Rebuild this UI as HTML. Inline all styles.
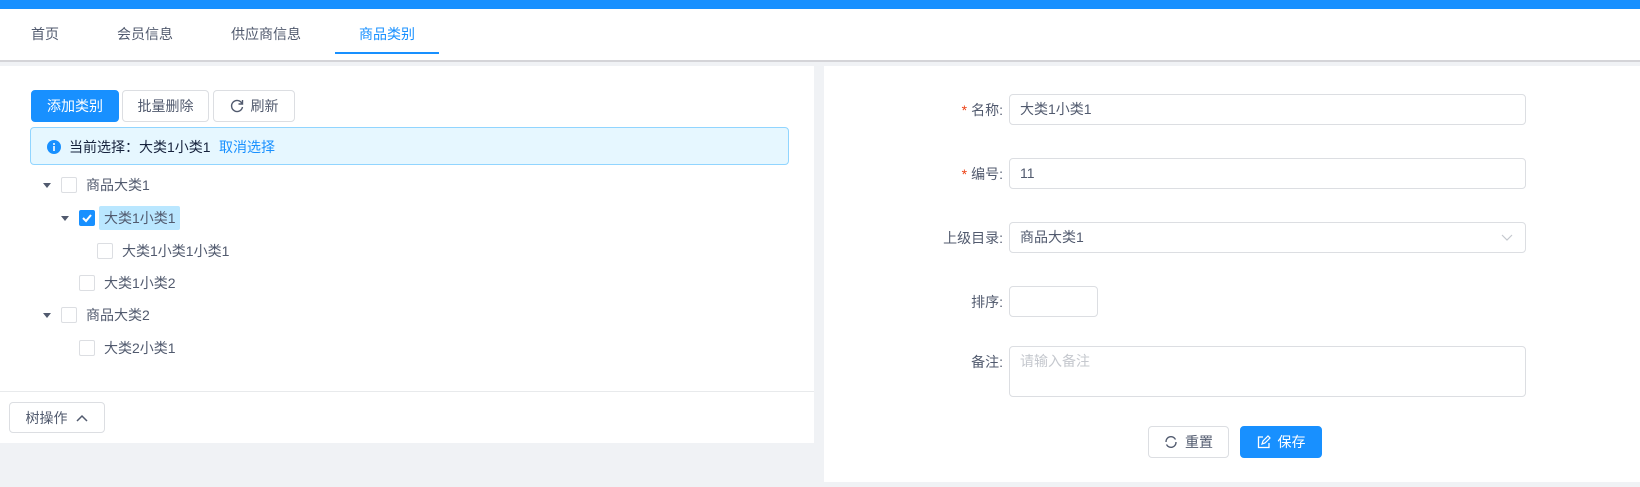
<!DOCTYPE html>
<html><head><meta charset="utf-8"><style>
*{box-sizing:border-box;margin:0;padding:0}
body{width:1640px;height:487px;background:#f0f2f5;font-family:"Liberation Sans","Noto Sans CJK SC",sans-serif;font-size:14px;color:#606266;position:relative;overflow:hidden}
.abs{position:absolute}
.top{left:0;top:0;width:1640px;height:9px;background:#1890ff}
.tabs{left:0;top:9px;width:1640px;height:53px;background:#fff;border-bottom:2px solid #d4d4d8}
.tab{position:absolute;top:17px;font-size:14px;color:#515a6e;line-height:16px}
.card{background:#fff}
.btn{position:absolute;height:32px;border:1px solid #dcdee2;border-radius:4px;background:#fff;color:#515a6e;font-size:14px;display:flex;align-items:center;justify-content:center;gap:7px}
.btn.p{background:#1890ff;border-color:#1890ff;color:#fff}
.cb{position:absolute;width:16px;height:16px;border:1px solid #dcdee2;border-radius:2px;background:#fff}
.arr{position:absolute;width:0;height:0;border-left:4px solid transparent;border-right:4px solid transparent;border-top:5px solid #515a6e}
.tt{position:absolute;font-size:14px;color:#515a6e;line-height:20px}
.lbl{position:absolute;right:calc(1640px - 1003px);font-size:14px;color:#515a6e;line-height:20px;white-space:nowrap}
.lbl i{color:#ed4014;font-style:normal;margin-right:4px}
.inp{position:absolute;left:1009px;border:1px solid #dcdee2;border-radius:4px;background:#fff;font-size:14px;color:#515a6e;padding-left:10px;line-height:29px}
</style></head><body>
<div class="abs top"></div>
<div class="abs tabs">
<span class="tab" style="left:31px">首页</span>
<span class="tab" style="left:117px">会员信息</span>
<span class="tab" style="left:231px">供应商信息</span>
<span class="tab" style="left:359px;color:#1890ff">商品类别</span>
<div class="abs" style="left:335px;top:43px;width:104px;height:2px;background:#1890ff"></div>
</div>

<div class="abs card" style="left:0;top:66px;width:814px;height:377px">
</div>
<div class="btn p" style="left:31px;top:90px;width:88px">添加类别</div>
<div class="btn" style="left:122px;top:90px;width:87px">批量删除</div>
<div class="btn" style="left:213px;top:90px;width:82px"><svg width="14" height="14" viewBox="0 0 14 14"><path d="M12 4.5A5.5 5.5 0 1 0 12.5 8" fill="none" stroke="#515a6e" stroke-width="1.4"/><path d="M12.5 1v4h-4" fill="none" stroke="#515a6e" stroke-width="1.4"/></svg>刷新</div>
<div class="abs" style="left:30px;top:127px;width:759px;height:38px;background:#e6f7ff;border:1px solid #91d5ff;border-radius:4px"></div>
<svg class="abs" style="left:47px;top:140px" width="14" height="14" viewBox="0 0 14 14"><circle cx="7" cy="7" r="7" fill="#1890ff"/><rect x="6.2" y="6" width="1.6" height="5" fill="#fff"/><circle cx="7" cy="4" r="1" fill="#fff"/></svg>
<span class="tt" style="left:69px;top:137px;color:#17233d">当前选择：大类1小类1</span>
<span class="tt" style="left:219px;top:137px;color:#1890ff">取消选择</span>

<div class="arr" style="left:43px;top:183px"></div><div class="cb" style="left:61px;top:177px"></div><span class="tt" style="left:86px;top:175px">商品大类1</span>
<div class="arr" style="left:61px;top:216px"></div><div class="cb" style="left:79px;top:210px;background:#1890ff;border-color:#1890ff"><svg width="14" height="14" viewBox="0 0 14 14" style="position:absolute;left:0;top:0"><path d="M3 7l3 3 5-6" fill="none" stroke="#fff" stroke-width="2"/></svg></div>
<div class="abs" style="left:99px;top:206px;width:81px;height:24px;background:#bae7ff;border-radius:2px"></div><span class="tt" style="left:104px;top:208px">大类1小类1</span>
<div class="cb" style="left:97px;top:243px"></div><span class="tt" style="left:122px;top:241px">大类1小类1小类1</span>
<div class="cb" style="left:79px;top:275px"></div><span class="tt" style="left:104px;top:273px">大类1小类2</span>
<div class="arr" style="left:43px;top:313px"></div><div class="cb" style="left:61px;top:307px"></div><span class="tt" style="left:86px;top:305px">商品大类2</span>
<div class="cb" style="left:79px;top:340px"></div><span class="tt" style="left:104px;top:338px">大类2小类1</span>
<div class="abs" style="left:0;top:391px;width:814px;height:1px;background:#e8eaec"></div>
<div class="btn" style="left:9px;top:402px;width:96px;height:31px">树操作 <svg width="14" height="10" viewBox="0 0 14 10"><path d="M2 8l5-5 5 5" fill="none" stroke="#515a6e" stroke-width="1.5"/></svg></div>

<div class="abs card" style="left:824px;top:66px;width:816px;height:416px"></div>
<span class="lbl" style="top:100px"><i>*</i>名称:</span>
<div class="inp" style="top:94px;width:517px;height:31px">大类1小类1</div>
<span class="lbl" style="top:164px"><i>*</i>编号:</span>
<div class="inp" style="top:158px;width:517px;height:31px">11</div>
<span class="lbl" style="top:228px">上级目录:</span>
<div class="inp" style="top:222px;width:517px;height:31px">商品大类1<svg style="position:absolute;right:12px;top:11px" width="12" height="8" viewBox="0 0 12 8"><path d="M1 1l5 5 5-5" fill="none" stroke="#c5c8ce" stroke-width="1.2"/></svg></div>
<span class="lbl" style="top:292px">排序:</span>
<div class="inp" style="top:286px;width:89px;height:31px"></div>
<span class="lbl" style="top:352px">备注:</span>
<div class="inp" style="top:346px;width:517px;height:51px;color:#c5c8ce;line-height:20px;padding-top:4px">请输入备注</div>
<div class="btn" style="left:1148px;top:426px;width:81px;height:32px"><svg width="14" height="14" viewBox="0 0 14 14"><path d="M11.5 4.5A5 5 0 0 0 2 7M2.5 9.5A5 5 0 0 0 12 7" fill="none" stroke="#515a6e" stroke-width="1.4"/></svg>重置</div>
<div class="btn p" style="left:1240px;top:426px;width:82px;height:32px"><svg width="14" height="14" viewBox="0 0 14 14"><path d="M6 2H1.5v10.5H12V8" fill="none" stroke="#fff" stroke-width="1.3"/><path d="M5 9l1-3 5-5 2 2-5 5z" fill="none" stroke="#fff" stroke-width="1.2"/></svg>保存</div>
</body></html>
